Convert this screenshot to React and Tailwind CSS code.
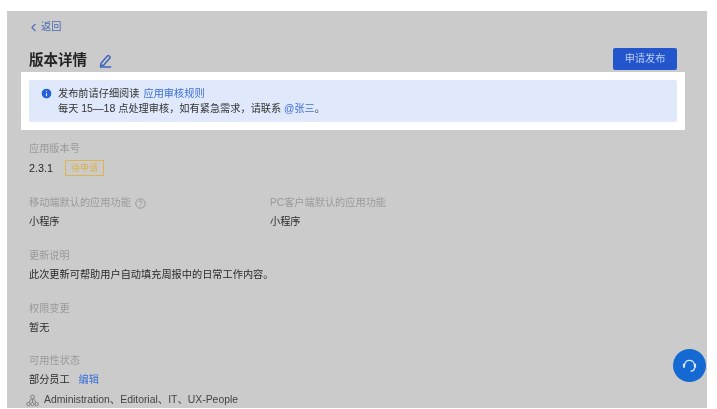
import React from "react";
import { ChevronLeft, Info } from "lucide-react";

const cjk = { fontFamily: '"Liberation Sans", "Noto Sans CJK SC", sans-serif' };

const Label = ({ children }) => (
  <div className="h-[14px] text-[10.2px] leading-[14px] text-[#9a9a9a]">{children}</div>
);

const Value = ({ children }) => (
  <div className="mt-[5px] h-[14px] text-[10.2px] leading-[14px] text-[#2a2a2a]">{children}</div>
);

const OrgIcon = () => (
  <svg width="13" height="13" viewBox="0 0 13 13" fill="none" stroke="#777" strokeWidth="0.9">
    <circle cx="6.5" cy="3" r="1.9" />
    <circle cx="2.4" cy="10.2" r="1.7" />
    <circle cx="6.5" cy="10.2" r="1.7" />
    <circle cx="10.6" cy="10.2" r="1.7" />
    <path d="M5.3 4.6 3 8.6M6.5 5v3.4M7.7 4.6 10 8.6" />
  </svg>
);

const Pencil = () => (
  <svg width="13" height="14" viewBox="0 0 13 14" fill="none" stroke="#3f63bd" strokeWidth="1.5">
    <path d="M2 9.2 8.4 1.9a1 1 0 0 1 1.5-.1l.9.8a1 1 0 0 1 .1 1.4L4.6 11.2l-2.9.6z" strokeLinejoin="round" />
    <path d="M.8 13h11.4" />
  </svg>
);

const Headset = () => (
  <svg width="17" height="17" viewBox="0 0 17 17" fill="none" stroke="#dbe8f8" strokeLinecap="round">
    <path d="M3.8 7.2a4.8 4.8 0 0 1 9.4 0" strokeWidth="1.3" />
    <path d="M3 7.6v2.2" strokeWidth="2.2" />
    <path d="M14 7.6v2.2" strokeWidth="2.2" />
    <path d="M13.6 11c-.2 2-1.6 3-3.6 3.2" strokeWidth="1.3" />
  </svg>
);

export default function App() {
  return (
    <div className="h-[409px] w-[717px] overflow-hidden bg-white pt-[11px] pl-[7px]" style={cjk}>
      <div className="relative h-[397px] w-[700px] overflow-hidden bg-[#cbcbcb] pr-[30px] pl-[22px] pt-[9px] blur-[0.4px]">
        <div className="flex h-[14px] items-center text-[10.2px] text-[#4c6db8]">
          <ChevronLeft size={13} strokeWidth={2} className="-ml-[2px] mr-[1px]" />
          返回
        </div>

        <div className="mt-[4px] flex h-[32px] items-end justify-between">
          <div className="flex items-center">
            <h1 className="text-[14.5px] leading-[20px] font-semibold text-[#222]">版本详情</h1>
            <span className="ml-[12px] mt-[2px]"><Pencil /></span>
          </div>
          <button className="h-[22px] w-[64px] rounded-[2px] bg-[#2356cc] text-[10.2px] text-[#bccdf0]">
            申请发布
          </button>
        </div>

        <div className="-mx-[8px] mt-[2px] bg-white p-[8px]">
          <div className="flex h-[42px] rounded-[2px] bg-[#e0e9fb] pt-[6px] pl-[11px] text-[10.2px] leading-[15px] text-[#333]">
            <Info size={13} fill="#2561d8" stroke="#e0e9fb" strokeWidth={2} className="mt-[1px] mr-[5px] shrink-0" />
            <div>
              <div>发布前请仔细阅读<span className="ml-[4px] text-[#3c6fd8]">应用审核规则</span></div>
              <div>每天 <span className="text-[10.6px]">15—18</span> 点处理审核，如有紧急需求，请联系 <span className="text-[#3c6fd8]">@张三</span>。</div>
            </div>
          </div>
        </div>

        <div className="mt-[12px]">
          <Label>应用版本号</Label>
          <div className="mt-[4px] flex h-[16px] items-center text-[10.8px] text-[#2a2a2a]">
            2.3.1
            <span className="ml-[12px] flex h-[16px] w-[39px] items-center justify-center border border-[#dcb450] text-[9px] leading-[14px] text-[#dcb14a]">
              待申请
            </span>
          </div>
        </div>

        <div className="mt-[20px] flex">
          <div className="w-[241px]">
            <div className="flex items-center">
              <Label>移动端默认的应用功能</Label>
              <svg width="11" height="11" viewBox="0 0 11 11" fill="none" stroke="#8a8a8a" strokeWidth="0.8" className="ml-[4px]">
                <circle cx="5.5" cy="5.5" r="4.7" />
                <path d="M4.1 4.3c0-2 2.9-1.9 2.9-.1 0 1.1-1.5 1.1-1.5 2.3M5.5 7.5v.8" />
              </svg>
            </div>
            <Value>小程序</Value>
          </div>
          <div>
            <Label>PC客户端默认的应用功能</Label>
            <Value>小程序</Value>
          </div>
        </div>

        <div className="mt-[20px]">
          <Label>更新说明</Label>
          <Value>此次更新可帮助用户自动填充周报中的日常工作内容。</Value>
        </div>

        <div className="mt-[20px]">
          <Label>权限变更</Label>
          <Value>暂无</Value>
        </div>

        <div className="mt-[19px]">
          <Label>可用性状态</Label>
          <Value>
            部分员工 <span className="ml-[6px] text-[#3c6fd8]">编辑</span>
          </Value>
          <div className="mt-[6px] -ml-[3px] flex h-[14px] items-center text-[10.4px] text-[#444]">
            <OrgIcon />
            <span className="ml-[5px]">Administration、Editorial、IT、UX-People</span>
          </div>
        </div>

        <button className="absolute top-[338px] left-[666px] flex h-[33px] w-[33px] items-center justify-center rounded-full bg-[#1569d3]">
          <Headset />
        </button>
      </div>
    </div>
  );
}
